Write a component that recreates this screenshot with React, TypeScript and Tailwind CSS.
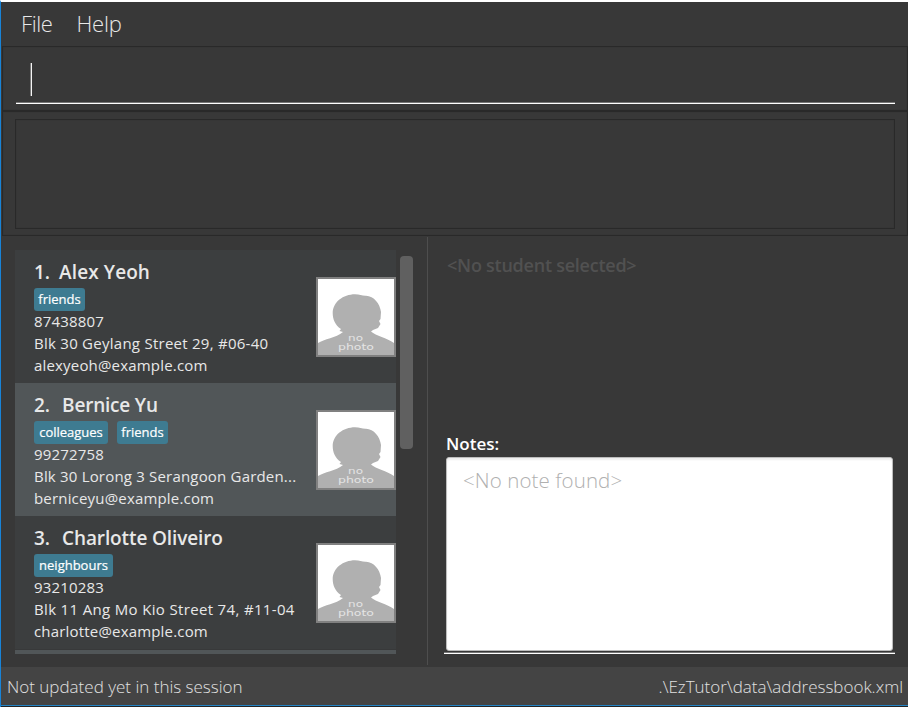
import React from "react";

type Student = {
  name: string;
  index: string;
  nameClass: string;
  tags: { label: string; width: string }[];
  phone: string;
  address: string;
  addressClass: string;
  email: string;
  background: string;
};

const students: Student[] = [
  {
    index: "1.",
    name: "Alex Yeoh",
    nameClass: "ml-[9px] tracking-[0.1px]",
    tags: [{ label: "friends", width: "w-[51px]" }],
    phone: "87438807",
    address: "Blk 30 Geylang Street 29, #06-40",
    addressClass: "tracking-[0.26px]",
    email: "alexyeoh@example.com",
    background: "bg-[#3c3e3f]",
  },
  {
    index: "2.",
    name: "Bernice Yu",
    nameClass: "ml-[12px] tracking-[-0.2px]",
    tags: [
      { label: "colleagues", width: "w-[74px]" },
      { label: "friends", width: "w-[51px]" },
    ],
    phone: "99272758",
    address: "Blk 30 Lorong 3 Serangoon Garden...",
    addressClass: "tracking-[0.19px]",
    email: "berniceyu@example.com",
    background: "bg-[#515658]",
  },
  {
    index: "3.",
    name: "Charlotte Oliveiro",
    nameClass: "ml-[12px] tracking-[-0.12px]",
    tags: [{ label: "neighbours", width: "w-[79px]" }],
    phone: "93210283",
    address: "Blk 11 Ang Mo Kio Street 74, #11-04",
    addressClass: "tracking-[0.34px]",
    email: "charlotte@example.com",
    background: "bg-[#3c3e3f]",
  },
];

function NoPhoto() {
  return (
    <svg width="80" height="80" viewBox="0 0 80 80" className="mt-[27px] shrink-0">
      <rect width="80" height="80" fill="#808080" />
      <rect x="2" y="2" width="76" height="76" fill="#fff" />
      <path
        d="M2 66 C8 62 20 61 27 55 L23.500 54 L25 52 C19 48 16.700 42 16.700 36 C17 25 27 17.500 39 17.300 C44 17.300 46 19 50 18.800 C58 19 64 27 65 35 L64.500 42 L63 44 L64.500 47 L62 51 L57 53 L55 54.500 C60 59 71 61 78 66 V78 H2 Z"
        fill="#b0b0b0"
      />
      <g fill="#e4e4e4" fontFamily="'DejaVu Sans', sans-serif" fontSize="9">
        <text x="32" y="63.500" textLength="15" lengthAdjust="spacingAndGlyphs">no</text>
        <text x="22" y="72.500" textLength="36" lengthAdjust="spacingAndGlyphs">photo</text>
      </g>
    </svg>
  );
}

function StudentCard({ student: s }: { student: Student }) {
  return (
    <div className={`flex h-[133px] shrink-0 pl-[19px] text-[#e8e8e8] ${s.background}`}>
      <div className="w-[282px] whitespace-nowrap pt-[9px] text-[15px] leading-[22px] tracking-[0.18px]">
        <div className="flex h-[27px] text-[19px] font-semibold leading-[26px] tracking-normal">
          <span>{s.index}</span>
          <span className={s.nameClass}>{s.name}</span>
        </div>
        <div className="mb-[-1px] mt-[2px] flex h-[23px] gap-[9px] text-[13px] font-medium tracking-normal text-white">
          {s.tags.map((t) => (
            <span key={t.label} className={`rounded-[3px] bg-[#3e7b91] text-center [-webkit-text-stroke:0.2px_white] ${t.width}`}>
              {t.label}
            </span>
          ))}
        </div>
        <div>{s.phone}</div>
        <div className={s.addressClass}>{s.address}</div>
        <div>{s.email}</div>
      </div>
      <NoPhoto />
    </div>
  );
}

export default function App() {
  return (
    <div className="flex h-[707px] w-[908px] flex-col overflow-hidden border-t-2 border-l border-t-white border-l-[#1883d7] bg-[#383838] font-['Open_Sans','Noto_Sans',sans-serif]">
      <nav className="flex h-[44px] gap-[24px] pl-[20px] text-[22px] font-light leading-[43px] tracking-[-0.4px] text-[#e8e8e8]">
        <span>File</span>
        <span className="tracking-[-0.2px]">Help</span>
      </nav>
      <div className="ml-px h-[65px] border border-[#292929] pl-[13px] pr-[12px] pt-[16px] shadow-[inset_0_0_1px_#2b2b2b]">
        <div className="h-[41px] border-b border-white pl-[14px] shadow-[inset_0_-1px_0_#777]">
          <div className="h-[33px] w-[2px] border-l border-[#777777] bg-[#f4f4f4]" />
        </div>
      </div>
      <div className="ml-px h-[125px] border border-[#292929] pl-[12px] pr-[12px] pt-[7px] shadow-[inset_0_0_1px_#2b2b2b]">
        <div className="h-[110px] border border-[#292929] shadow-[inset_0_0_1px_#2b2b2b]" />
      </div>
      <main className="flex h-[431px]">
        <section className="flex w-[426px] pl-[14px] pt-[14px]">
          <div className="flex h-[404px] w-[381px] flex-col overflow-hidden">
            {students.map((s) => (
              <StudentCard key={s.index} student={s} />
            ))}
            <div className="h-[5px] shrink-0 border-t border-[#38393a] bg-[#515658]" />
          </div>
          <div className="ml-[4px] mt-[6px] h-[193px] w-[13px] rounded-[4px] bg-[#606060]" />
        </section>
        <div className="mt-px h-[428px] w-px bg-[#4e4e4e]" />
        <section className="flex-1 pl-[16px] pr-[13px]">
          <div className="ml-[3px] h-[193px] pt-[16px] text-[18px] font-semibold leading-[27px] tracking-[-0.25px] text-[#515151]">
            &lt;No student selected&gt;
          </div>
          <div className="ml-[2px] h-[28px] text-[17px] font-semibold leading-[29px] text-white">Notes:</div>
          <div className="border-b border-white pl-[2px] pb-[2px] pr-[2px] shadow-[inset_0_-1px_0_#777]">
            <div className="h-[194px] rounded-[3px] border border-[#bdbdbd] bg-white pl-[16px] pt-[7px] text-[20.5px] font-light leading-[30px] tracking-[0.1px] text-[#b0b0b0] shadow-[inset_0_2px_2px_#eeeeee]">
              &lt;No note found&gt;
            </div>
          </div>
        </section>
      </main>
      <footer className="flex h-[38px] justify-between bg-[#444444] pl-[6px] pr-[5px] text-[17px] font-light leading-[39px] text-[#e0e0e0]">
        <span>Not updated yet in this session</span>
        <span>.\EzTutor\data\addressbook.xml</span>
      </footer>
      <div className="h-[2px] border-t border-[#2383c4] bg-[#242424]" />
    </div>
  );
}
